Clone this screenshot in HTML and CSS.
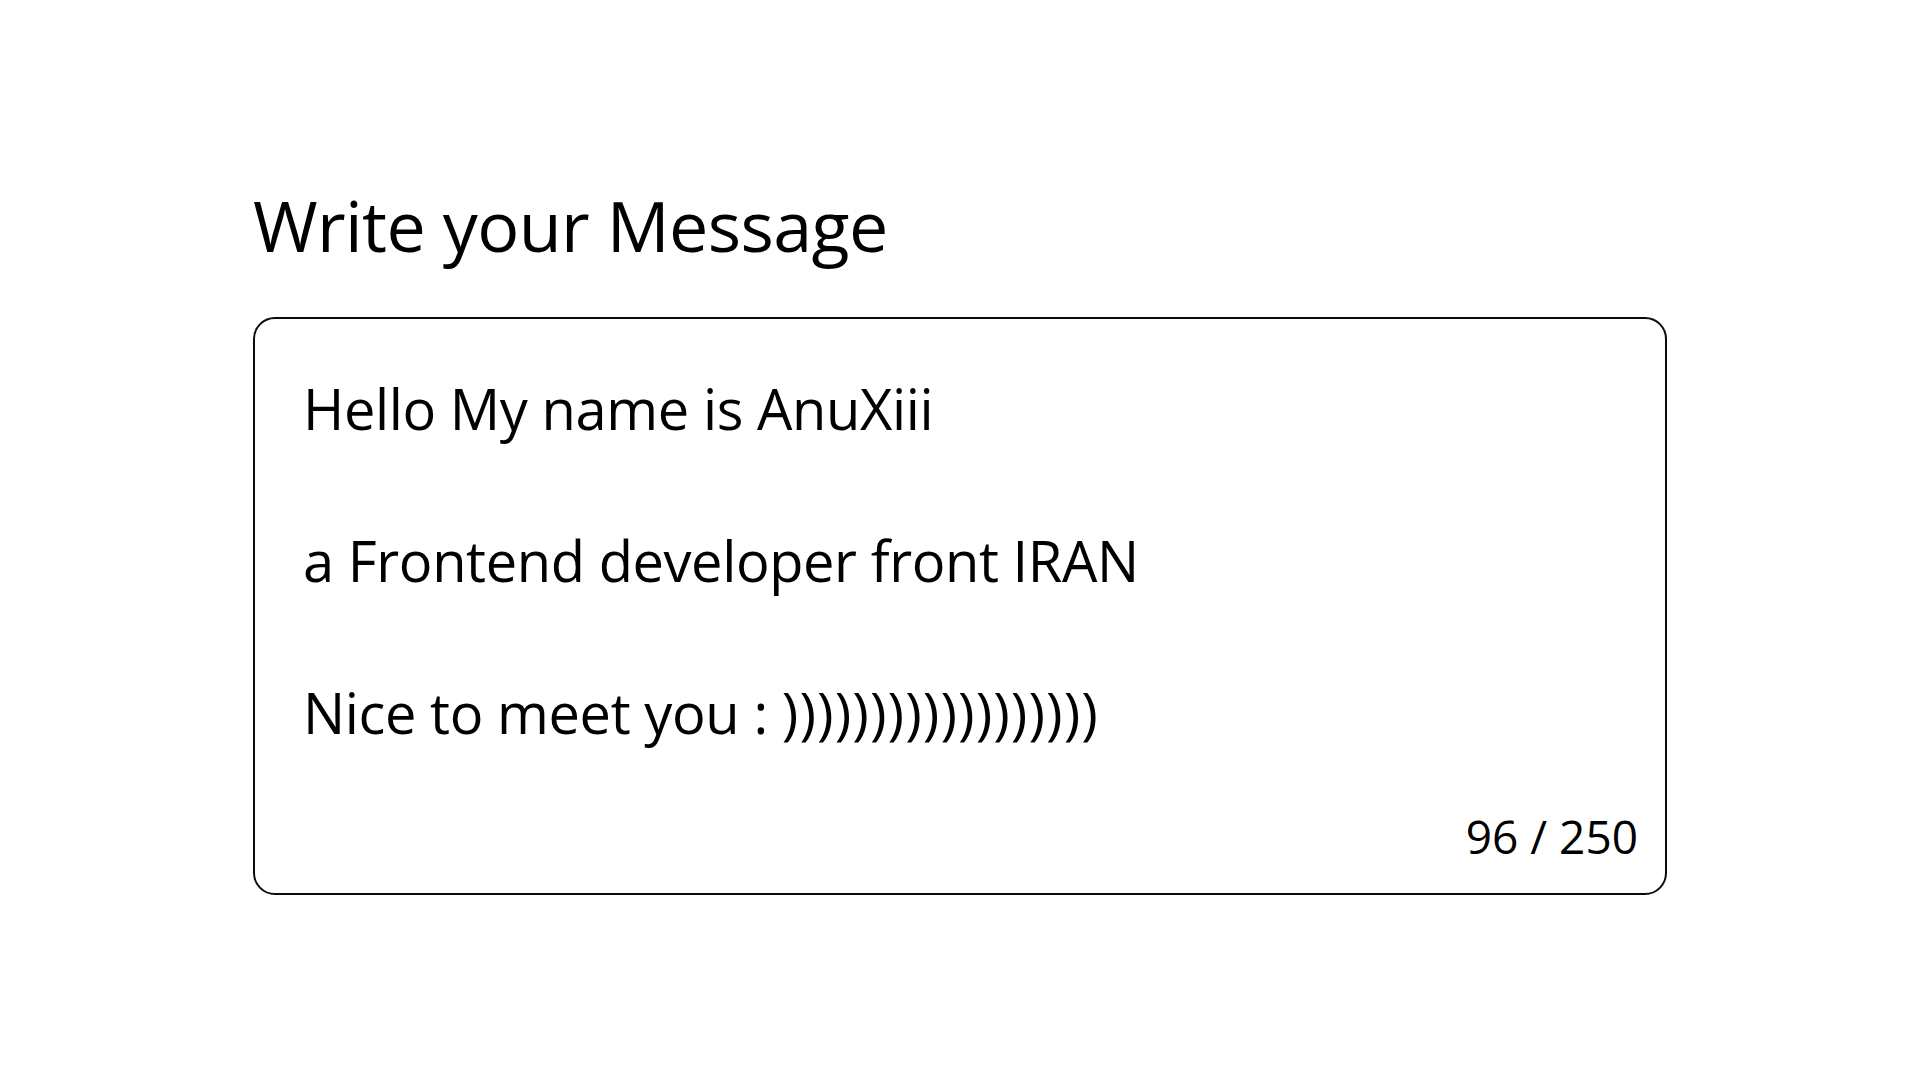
FILE: index.html
```html
<!DOCTYPE html>
<html lang="en">
<head>
<meta charset="utf-8">
<title>Write your Message</title>
<link rel="stylesheet" href="styles.css">
</head>
<body>
<main class="page">
  <h1 class="title">Write your Message</h1>
  <div class="box">
    <div class="message">
      <p class="line">Hello My name is AnuXiii</p>
      <p class="line">a Frontend developer front IRAN</p>
      <p class="line"><span>Nice to meet you : </span><span class="smile">))))))))))))))))))</span></p>
    </div>
    <div class="counter">96 / 250</div>
  </div>
</main>
</body>
</html>
```

FILE: styles.css
```css
html, body {
  margin: 0;
  padding: 0;
  background: #ffffff;
}

body {
  font-family: "Open Sans", "Noto Sans", sans-serif;
  color: #000;
}

.page {
  width: 1414px;
  margin: 0 auto;
  padding-top: 175px;
  display: flex;
  flex-direction: column;
}

.title {
  margin: 0 0 42px 0;
  font-size: 70px;
  font-weight: 400;
  line-height: 100px;
  letter-spacing: -0.6px;
}

.box {
  height: 578px;
  box-sizing: border-box;
  border: 2px solid #0a0a0a;
  border-radius: 22px;
  display: flex;
  flex-direction: column;
  padding: 51px 27px 27px 48px;
}

.message {
  flex: 1;
  display: flex;
  flex-direction: column;
  gap: 76px;
  font-size: 56px;
  line-height: 76px;
  letter-spacing: -0.4px;
  color: #000;
}

.line {
  margin: 0;
  white-space: pre;
}

.smile {
  letter-spacing: 1.1px;
}

.counter {
  align-self: flex-end;
  font-size: 46px;
  line-height: 60px;
}
```
